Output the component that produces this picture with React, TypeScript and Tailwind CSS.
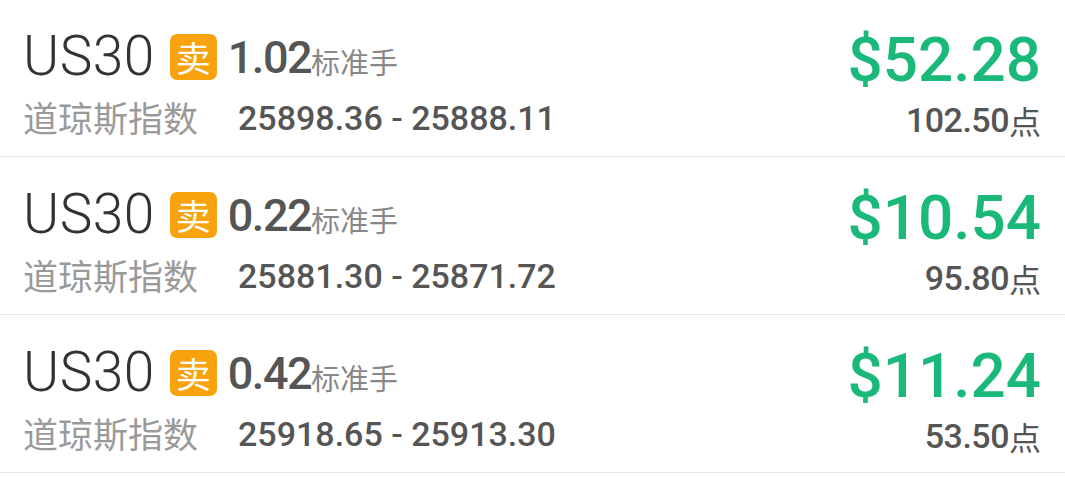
import React from "react";

const rows = [
  { lots: "1.02", range: "25898.36 - 25888.11", price: "$52.28", pts: "102.50" },
  { lots: "0.22", range: "25881.30 - 25871.72", price: "$10.54", pts: "95.80" },
  { lots: "0.42", range: "25918.65 - 25913.30", price: "$11.24", pts: "53.50" },
];

export default function App() {
  return (
    <div className="w-[1065px] h-[478px] bg-white overflow-hidden">
      <div className="-mt-px">
        {rows.map((r, i) => (
          <div
            key={i}
            className="h-[158px] border-b border-[#e6e6e6] flex justify-between pl-[23px] pr-[24px]"
          >
            <div className="flex flex-col pt-[32px]">
              <div className="flex items-center h-[50px]">
                <span className="font-['Roboto','Noto_Sans_CJK_SC',sans-serif] text-[55px] leading-[50px] font-light text-[#333] tracking-[0.5px]">
                  US30
                </span>
                <span className="font-['Noto_Sans_CJK_SC',sans-serif] ml-[15px] w-[47px] h-[46px] rounded-[7px] bg-[#f8a20d] text-white text-[35px] leading-none flex items-center justify-center mt-[1px]">
                  卖
                </span>
                <span className="font-['Roboto','Noto_Sans_CJK_SC',sans-serif] ml-[11px] text-[45px] leading-[50px] font-medium text-[#555] tracking-[-1.5px] mt-[4px]">
                  {r.lots}
                </span>
                <span className="font-['Noto_Sans_CJK_SC',sans-serif] text-[29px] leading-[50px] text-[#888] mt-[10px]">
                  标准手
                </span>
              </div>
              <div className="flex items-center h-[40px] mt-[16px]">
                <span className="font-['Noto_Sans_CJK_SC',sans-serif] text-[35px] leading-[40px] text-[#9a9a9a]">
                  道琼斯指数
                </span>
                <span className="font-['Roboto','Noto_Sans_CJK_SC',sans-serif] ml-[40px] mt-[2px] text-[34px] leading-[40px] font-medium text-[#555] whitespace-pre">
                  {r.range}
                </span>
              </div>
            </div>
            <div className="flex flex-col items-end pt-[31px]">
              <span className="font-['Roboto','Noto_Sans_CJK_SC',sans-serif] text-[62px] leading-[60px] font-medium text-[#1ab97a]">
                {r.price}
              </span>
              <span className="flex items-center h-[40px] mt-[10px]">
                <span className="font-['Roboto','Noto_Sans_CJK_SC',sans-serif] text-[34px] leading-[40px] font-medium text-[#555] tracking-[-0.5px]">
                  {r.pts}
                </span>
                <span className="font-['Noto_Sans_CJK_SC',sans-serif] text-[32px] leading-[40px] text-[#555]">
                  点
                </span>
              </span>
            </div>
          </div>
        ))}
      </div>
    </div>
  );
}
